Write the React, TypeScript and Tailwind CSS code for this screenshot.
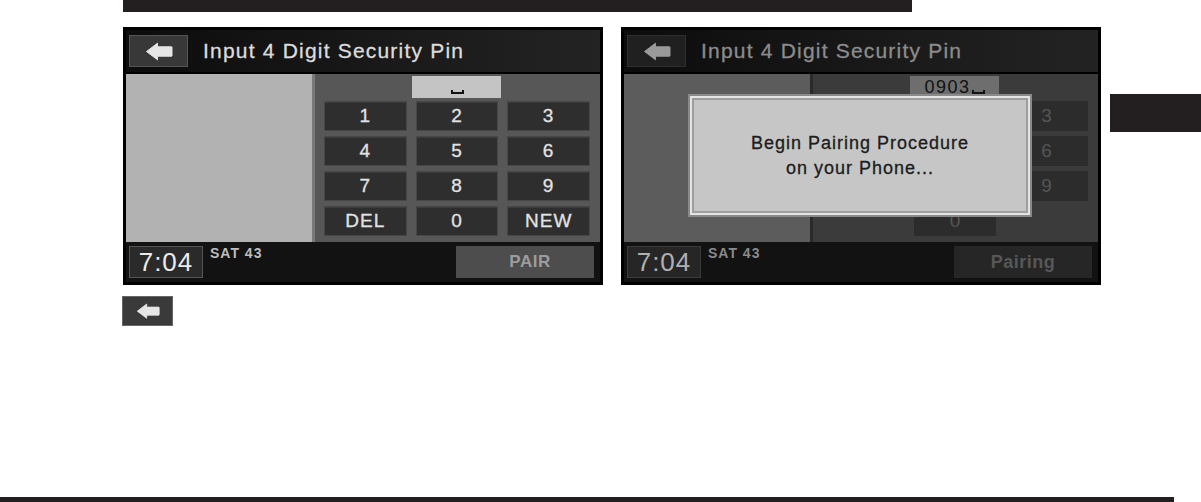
const font = "font-['Liberation_Sans',Arial,sans-serif]";

function BackArrow({ color, size = 28 }: { color: string; size?: number }) {
  return (
    <svg width={size} height={(size * 19) / 28} viewBox="0 0 28 19">
      <path
        d="M1.5 9.5 L12.5 1.2 L12.5 4.8 L26.5 4.8 Q27 4.8 27 5.3 L27 13.7 Q27 14.2 26.5 14.2 L12.5 14.2 L12.5 17.8 Z"
        fill={color}
        stroke={color}
        strokeWidth="1"
        strokeLinejoin="round"
      />
    </svg>
  );
}

function Cursor() {
  return <span className="mb-[4px] ml-[1px] inline-block h-[4px] w-[13px] border-x-[2px] border-b-[2px] border-[#111]" />;
}

type ScreenProps = {
  dim?: boolean;
  action: string;
};

const keys = ["1", "2", "3", "4", "5", "6", "7", "8", "9", "DEL", "0", "NEW"];
// keys that stay visible around the pairing dialog
const dimShown = ["3", "6", "9", "0"];

function Screen({ dim, action }: ScreenProps) {
  return (
    <div className="relative flex h-[258px] w-[480px] flex-col bg-black p-[3px]">
      {/* header */}
      <div className="flex h-[42px] items-center gap-[15px] bg-gradient-to-r from-[#0c0c0c] via-[#181818] to-[#232323] pl-[3px]">
        <div
          className={
            dim
              ? "flex h-[32px] w-[59px] items-center justify-center border border-[#2e2e2e] bg-[#202020]"
              : "flex h-[32px] w-[59px] items-center justify-center border border-[#555] bg-[#383838]"
          }
        >
          <BackArrow color={dim ? "#9a9a9a" : "#e6e6e6"} />
        </div>
        <span
          className={
            dim
              ? "text-[21px] tracking-[1.2px] text-[#8c8c8c] [-webkit-text-stroke:0.3px_#8c8c8c]"
              : "text-[21px] tracking-[1.2px] text-[#dcdcdc] [-webkit-text-stroke:0.3px_#dcdcdc]"
          }
        >
          Input 4 Digit Security Pin
        </span>
      </div>

      {/* content */}
      <div className="mt-[2px] flex h-[168px]">
        <div className={dim ? "w-[186px] bg-[#5c5c5c]" : "w-[186px] bg-[#b2b2b2]"} />
        <div className={dim ? "w-[3px] bg-[#2a2a2a]" : "w-[3px] bg-[#7a7a7a]"} />
        <div
          className={
            dim
              ? "flex flex-1 flex-col bg-[#3b3b3b] pl-[9px] pr-[10px] pt-[2px]"
              : "flex flex-1 flex-col bg-[#575757] pl-[9px] pr-[10px] pt-[2px]"
          }
        >
          {dim ? (
            <div className="ml-[88px] flex h-[22px] w-[89px] items-end justify-center bg-[#6e6e6e] text-[18px] leading-[21px] tracking-[1.5px] text-[#111]">
              0903
              <Cursor />
            </div>
          ) : (
            <div className="ml-[88px] flex h-[22px] w-[89px] items-end justify-center bg-[#c4c4c4]">
              <Cursor />
            </div>
          )}
          <div className="mt-[3px] grid grid-cols-3 gap-x-[9px] gap-y-[5px]">
            {keys.map((k) =>
              dim ? (
                k === "DEL" || k === "NEW" ? (
                  <div key={k} className="h-[30px]" />
                ) : (
                  <div
                    key={k}
                    className="flex h-[30px] items-center justify-center bg-[#2c2c2c] text-[19px] text-[#555]"
                  >
                    {dimShown.includes(k) ? k : ""}
                  </div>
                )
              ) : (
                <div
                  key={k}
                  className="flex h-[30px] items-center justify-center border border-[#474747] bg-[#2e2e2e] text-[19px] tracking-[1px] text-[#e2e2e2] shadow-[inset_0_1px_0_#3c3c3c] [-webkit-text-stroke:0.3px_#e2e2e2]"
                >
                  {k}
                </div>
              )
            )}
          </div>
        </div>
      </div>

      {/* footer */}
      <div className="flex flex-1 items-start bg-[#121212] pl-[3px] pr-[6px] pt-[4px]">
        <div
          className={
            dim
              ? "flex h-[32px] w-[74px] items-center justify-center border border-[#3a3a3a] bg-[#262626] text-[26px] tracking-[1px] text-[#b0b0b0]"
              : "flex h-[32px] w-[74px] items-center justify-center border border-[#555] bg-[#2a2a2a] text-[26px] tracking-[1px] text-[#ececec]"
          }
        >
          7:04
        </div>
        <span
          className={
            dim
              ? "ml-[7px] mt-[-3px] text-[14px] font-bold tracking-[1px] text-[#8a8a8a]"
              : "ml-[7px] mt-[-3px] text-[14px] font-bold tracking-[1px] text-[#bdbdbd]"
          }
        >
          SAT 43
        </span>
        <div
          className={
            dim
              ? "ml-auto flex h-[32px] w-[138px] items-center justify-center bg-[#262626] text-[18px] font-bold tracking-[0.5px] text-[#575757]"
              : "ml-auto flex h-[32px] w-[138px] items-center justify-center bg-[#4d4d4d] pl-[10px] text-[17px] font-bold tracking-[0.5px] text-[#9c9c9c]"
          }
        >
          {action}
        </div>
      </div>

      {dim && (
        <div className="absolute left-[67px] top-[67px] flex h-[123px] w-[344px] items-center justify-center border-[2px] border-[#8a8a8a] bg-[#c6c6c6] text-center text-[18px] leading-[25px] tracking-[1px] text-[#1c1c1c] shadow-[inset_0_0_0_2px_#e4e4e4,inset_0_0_0_4px_#9e9e9e] [-webkit-text-stroke:0.3px_#1c1c1c]">
          <div>
            Begin Pairing Procedure
            <br />
            on your Phone...
          </div>
        </div>
      )}
    </div>
  );
}

export default function App() {
  return (
    <div className={`flex h-[502px] w-[1201px] flex-col bg-white ${font}`}>
      <div className="ml-[123px] h-[12px] w-[789px] bg-[#231f20]" />
      <div className="mt-[15px] flex items-start pl-[123px]">
        <Screen action="PAIR" />
        <div className="ml-[18px]">
          <Screen dim action="Pairing" />
        </div>
        <div className="ml-[9px] mt-[67px] h-[38px] w-[91px] bg-[#231f20]" />
      </div>
      <div className="ml-[122px] mt-[11px] flex h-[30px] w-[51px] items-center justify-center border border-[#666] bg-[#3a3a3a]">
        <BackArrow color="#e6e6e6" size={24} />
      </div>
      <div className="mt-auto h-[5px] w-[1174px] bg-[#231f20]" />
    </div>
  );
}
